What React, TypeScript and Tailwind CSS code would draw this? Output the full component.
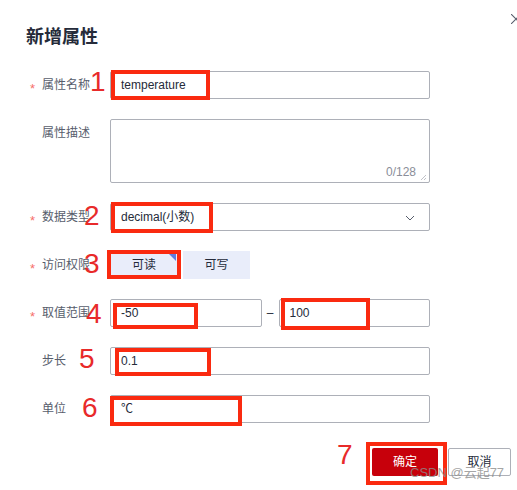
import React from 'react';

const RedBox: React.FC<{ className: string }> = ({ className }) => (
  <div className={`pointer-events-none absolute border-4 border-[#fa2a10] ${className}`} />
);

const Num: React.FC<{ n: string; className: string }> = ({ n, className }) => (
  <span
    className={`pointer-events-none absolute text-[28px] leading-[28px] text-[#e82a2a] font-['Liberation_Sans',sans-serif] ${className}`}
  >
    {n}
  </span>
);

const Label: React.FC<{ text: string; required?: boolean }> = ({ text, required }) => (
  <div className="flex h-7 w-[80px] shrink-0 items-center text-xs text-[#575d6c]">
    <span className="relative top-[3px] w-3 text-[13px] leading-none text-[#f66f6a]">{required ? '*' : ''}</span>
    <span>{text}</span>
  </div>
);

const Field: React.FC<{ value: string; children?: React.ReactNode }> = ({ value, children }) => (
  <div className="relative flex h-7 flex-1 items-center rounded-[2px] border border-[#adb0b8] px-[10px] text-xs text-[#252b3a]">
    {value}
    {children}
  </div>
);

export default function App() {
  return (
    <div className="relative h-[490px] w-[517px] overflow-hidden bg-white font-['Liberation_Sans','Noto_Sans_CJK_SC',sans-serif]">
      {/* close */}
      <svg className="absolute left-[511px] top-[14px]" width="10" height="10" viewBox="0 0 10 10">
        <path d="M0 0L10 10M10 0L0 10" stroke="#575d6c" strokeWidth="1.1" />
      </svg>

      <div className="px-[26px] pt-[23px]">
        <h1 className="h-6 text-[18px] font-bold leading-6 text-[#252b3a] font-['Noto_Sans_CJK_SC',sans-serif]">
          新增属性
        </h1>
      </div>

      <div className="mt-6 flex flex-col gap-5 pl-[30px] pr-[87px]">
        {/* name */}
        <div className="relative flex">
          <Label text="属性名称" required />
          <Field value="temperature">
            <RedBox className="left-[0px] top-[-2px] h-[30px] w-[99px]" />
          </Field>
          <Num n="1" className="left-[60px] top-[-3px]" />
        </div>

        {/* description */}
        <div className="relative flex">
          <Label text="属性描述" />
          <div className="relative h-16 flex-1 rounded-[2px] border border-[#adb0b8]">
            <span className="absolute bottom-[2px] right-[13px] text-xs text-[#8a8e99]">0/128</span>
            <svg className="absolute bottom-[2px] right-[3px]" width="6" height="6" viewBox="0 0 6 6">
              <path d="M6 1L1 6M6 4L4 6" stroke="#b0b3ba" strokeWidth="0.8" />
            </svg>
          </div>
        </div>

        {/* data type */}
        <div className="relative flex">
          <Label text="数据类型" required />
          <Field value="decimal(小数)">
            <svg className="absolute right-[14px] top-[11px]" width="10" height="6" viewBox="0 0 10 6">
              <path d="M1 1L5 5L9 1" fill="none" stroke="#575d6c" strokeWidth="1" />
            </svg>
            <RedBox className="left-[0px] top-[-2px] h-[31px] w-[102px]" />
          </Field>
          <Num n="2" className="left-[54px] top-[-1px]" />
        </div>

        {/* access */}
        <div className="relative flex">
          <Label text="访问权限" required />
          <div className="relative flex gap-[5px]">
            <div className="relative flex h-7 w-[68px] items-center justify-center bg-[#e9edfa] text-xs text-[#252b3a]">
              可读
              <svg className="absolute right-[2px] top-[1px]" width="9" height="9" viewBox="0 0 9 9">
                <path d="M0 0H9V9Z" fill="#5e7ce0" />
              </svg>
            </div>
            <div className="flex h-7 w-[67px] items-center justify-center bg-[#e9edfa] text-xs text-[#252b3a]">
              可写
            </div>
            <RedBox className="left-[-3px] top-[-1px] h-[29px] w-[74px]" />
          </div>
          <Num n="3" className="left-[54px] top-[-1px]" />
        </div>

        {/* range */}
        <div className="relative flex">
          <Label text="取值范围" required />
          <div className="flex flex-1 items-center">
            <Field value="-50">
              <RedBox className="left-[2px] top-[3px] h-[26px] w-[85px]" />
            </Field>
            <span className="w-[17px] text-center text-xs text-[#252b3a]">–</span>
            <Field value="100">
              <RedBox className="left-[1px] top-[-2px] h-[32px] w-[89px]" />
            </Field>
          </div>
          <Num n="4" className="left-[56px] top-[1px]" />
        </div>

        {/* step */}
        <div className="relative flex">
          <Label text="步长" />
          <Field value="0.1">
            <RedBox className="left-[4px] top-[0px] h-[28px] w-[96px]" />
          </Field>
          <Num n="5" className="left-[49px] top-[-2px]" />
        </div>

        {/* unit */}
        <div className="relative flex">
          <Label text="单位" />
          <Field value="℃">
            <RedBox className="left-[-1px] top-[0px] h-[30px] w-[132px]" />
          </Field>
          <Num n="6" className="left-[52px] top-[-1px]" />
        </div>
      </div>

      {/* footer */}
      <div className="relative mt-[25px] flex justify-end gap-[10px] pr-[6px]">
        <div className="relative">
          <button className="flex h-7 w-[66px] items-center justify-center rounded-[2px] bg-[#c7000b] text-xs text-white">
            确定
          </button>
          <RedBox className="left-[-6px] top-[-6px] h-[43px] w-[81px]" />
          <Num n="7" className="left-[-35px] top-[-7px]" />
        </div>
        <button className="flex h-7 w-[63px] items-center justify-center rounded-[2px] border border-[#adb0b8] bg-white text-xs text-[#252b3a]">
          取消
        </button>
        <span className="pointer-events-none absolute left-[410px] top-[18px] whitespace-nowrap text-[13px] leading-[13px] text-[#8c8c8c]/80">
          CSDN @云起77
        </span>
      </div>
    </div>
  );
}
